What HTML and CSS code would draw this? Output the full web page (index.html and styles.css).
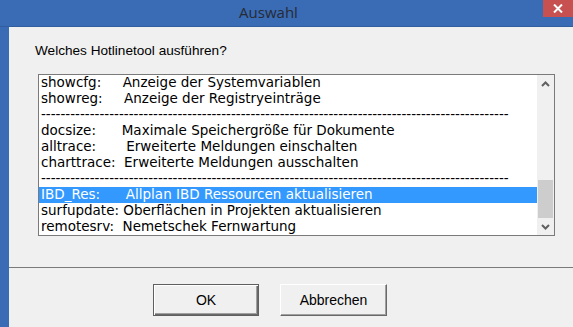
FILE: index.html
```html
<!DOCTYPE html>
<html lang="de">
<head>
<meta charset="utf-8">
<title>Auswahl</title>
<link rel="stylesheet" href="styles.css">
</head>
<body>
<div class="window">
  <div class="titlebar">
    <div class="title">Auswahl</div>
    <div class="close">
      <svg width="10" height="9" viewBox="0 0 10 9"><path d="M1 0.5 L9 8.5 M9 0.5 L1 8.5" stroke="#fff" stroke-width="2" fill="none"/></svg>
    </div>
  </div>
  <div class="frame">
    <div class="client">
      <p class="prompt">Welches Hotlinetool ausführen?</p>
      <div class="listbox">
        <ul class="items">
          <li>showcfg:     Anzeige der Systemvariablen</li>
          <li>showreg:     Anzeige der Registryeinträge</li>
          <li>------------------------------------------------------------------------------------------------</li>
          <li>docsize:      Maximale Speichergröße für Dokumente</li>
          <li>alltrace:       Erweiterte Meldungen einschalten</li>
          <li>charttrace:  Erweiterte Meldungen ausschalten</li>
          <li>------------------------------------------------------------------------------------------------</li>
          <li class="selected">IBD_Res:      Allplan IBD Ressourcen aktualisieren</li>
          <li>surfupdate: Oberflächen in Projekten aktualisieren</li>
          <li>remotesrv:  Nemetschek Fernwartung</li>
        </ul>
        <div class="scrollbar">
          <div class="arrow">
            <svg width="9" height="6" viewBox="0 0 9 6"><path d="M1 5 L4.5 1.5 L8 5" stroke="#606060" stroke-width="2" fill="none"/></svg>
          </div>
          <div class="track"><div class="thumb"></div></div>
          <div class="arrow">
            <svg width="9" height="6" viewBox="0 0 9 6"><path d="M1 1 L4.5 4.5 L8 1" stroke="#606060" stroke-width="2" fill="none"/></svg>
          </div>
        </div>
      </div>
      <div class="buttons">
        <button class="btn default">OK</button>
        <button class="btn">Abbrechen</button>
      </div>
    </div>
  </div>
</div>
</body>
</html>
```
FILE: styles.css
```css
html, body {
  margin: 0;
  padding: 0;
}
body {
  width: 573px;
  height: 327px;
  overflow: hidden;
  background: #3a6bb5;
}
.window {
  display: flex;
  flex-direction: column;
  height: 327px;
}
.titlebar {
  display: flex;
  height: 26px;
  border-bottom: 1px solid #315e9f;
  background: #3a6bb5;
}
.title {
  flex: 1;
  text-align: center;
  padding-right: 6px;
  font-family: "Open Sans", "Noto Sans", sans-serif;
  font-size: 15px;
  line-height: 25px;
  color: #262a33;
}
.close {
  width: 30px;
  height: 17px;
  background: #c75050;
  display: flex;
  align-items: center;
  justify-content: center;
}
.close svg {
  display: block;
}
.frame {
  flex: 1;
  display: flex;
  padding-left: 9px;
}
.client {
  flex: 1;
  background: #f0f0f0;
  display: flex;
  flex-direction: column;
}
.prompt {
  margin: 16px 0 0 26px;
  font-family: "Liberation Sans", Arial, sans-serif;
  font-size: 13.6px;
  line-height: 16px;
  color: #000;
}
.listbox {
  margin: 15px 0 0 29px;
  width: 515px;
  height: 160px;
  border: 1px solid #7a7a7a;
  background: #fff;
  display: flex;
}
.items {
  flex: 1;
  margin: 0;
  padding: 0;
  list-style: none;
  overflow: hidden;
  font-family: "DejaVu Sans", Verdana, sans-serif;
  font-size: 13.5px;
  line-height: 14px;
  color: #000;
}
.items li {
  box-sizing: border-box;
  height: 16px;
  padding: 0 0 2px 2px;
  white-space: pre;
  overflow: hidden;
}
.items li.selected {
  background: #3399ff;
  color: #fff;
}
.scrollbar {
  width: 17px;
  background: #f0f0f0;
  display: flex;
  flex-direction: column;
}
.arrow {
  height: 17px;
  display: flex;
  align-items: center;
  justify-content: center;
}
.arrow svg {
  display: block;
}
.track {
  flex: 1;
  display: flex;
  flex-direction: column;
  justify-content: flex-end;
}
.thumb {
  height: 38px;
  margin: 0 1px;
  background: #cdcdcd;
}
.buttons {
  margin-top: 31px;
  border-top: 1px solid #7a7a7a;
  padding: 16px 0 0 144px;
  display: flex;
  gap: 21px;
  flex: 1;
  align-items: flex-start;
}
.btn {
  width: 107px;
  height: 32px;
  margin: 0;
  padding: 0;
  background: #f0f0f0;
  font-family: "Liberation Sans", Arial, sans-serif;
  font-size: 14px;
  color: #000;
  border: 1px solid;
  border-color: #ffffff #696969 #696969 #ffffff;
  box-shadow: inset -1px -1px 0 #a0a0a0;
}
.btn.default {
  width: 106px;
  border-color: #5f5f5f;
  box-shadow: inset 1px 1px 0 #ffffff, inset -1px -1px 0 #696969, inset -2px -2px 0 #a0a0a0;
}
```
